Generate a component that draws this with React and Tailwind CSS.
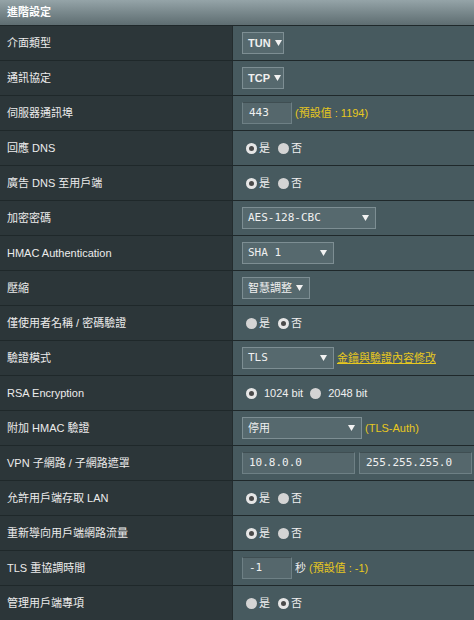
const FONT = { fontFamily: '"Liberation Sans", "Noto Sans CJK TC", sans-serif' };
const MONO = { fontFamily: '"DejaVu Sans Mono", "Noto Sans CJK TC", monospace' };

function Arrow() {
  return (
    <svg width="7" height="6" viewBox="0 0 7 6" className="shrink-0">
      <path d="M0 0 L7 0 L3.5 6 Z" fill="#f2f2f2" />
    </svg>
  );
}

function Select({ value, width, mono, bold }) {
  return (
    <div
      className={`flex h-[22px] items-center justify-between gap-[4px] whitespace-nowrap border border-[#7d8e93] bg-[#56696e] pl-[5px] pr-[6px] text-[11px] text-[#f0f0f0] ${bold ? "font-bold" : "font-normal"}`}
      style={{ width, ...(mono ? MONO : {}) }}
    >
      <span>{value}</span>
      <Arrow />
    </div>
  );
}

function Input({ value, width }) {
  return (
    <div
      className="flex h-[22px] items-center border border-[#6e8085] border-t-[#3f4e52] bg-[#55676c] pl-[6px] text-[11px] text-[#f0f0f0]"
      style={{ width, ...MONO }}
    >
      {value}
    </div>
  );
}

function Radio({ checked }) {
  return checked ? (
    <span className="flex h-[11px] w-[11px] shrink-0 items-center justify-center rounded-full bg-[#e6e6e6]">
      <span className="h-[5px] w-[5px] rounded-full bg-[#4a4a4a]" />
    </span>
  ) : (
    <span className="h-[11px] w-[11px] shrink-0 rounded-full bg-[#d4d4d4]" />
  );
}

function YesNo({ yes }) {
  return (
    <div className="flex items-center gap-[2px] pl-[4px] text-[11px] text-[#f0f0f0]">
      <Radio checked={yes} />
      <span className="mr-[6px]">是</span>
      <Radio checked={!yes} />
      <span>否</span>
    </div>
  );
}

const Note = ({ children }) => (
  <span className="whitespace-nowrap text-[11px] text-[#e8c81e]">{children}</span>
);

const rows = [
  ["介面類型", <Select value="TUN" width={42} bold />],
  ["通訊協定", <Select value="TCP" width={42} bold />],
  [
    "伺服器通訊埠",
    <div className="flex items-center gap-[3px]">
      <Input value="443" width={50} />
      <Note>(預設值 : 1194)</Note>
    </div>,
  ],
  ["回應 DNS", <YesNo yes />],
  ["廣告 DNS 至用戶端", <YesNo yes />],
  ["加密密碼", <Select value="AES-128-CBC" width={134} mono />],
  ["HMAC Authentication", <Select value="SHA 1" width={92} mono />],
  ["壓縮", <Select value="智慧調整" width={68} />],
  ["僅使用者名稱 / 密碼驗證", <YesNo yes={false} />],
  [
    "驗證模式",
    <div className="flex items-center gap-[3px]">
      <Select value="TLS" width={92} mono />
      <span className="whitespace-nowrap text-[11px] text-[#e8c81e] underline">金鑰與驗證內容修改</span>
    </div>,
  ],
  [
    "RSA Encryption",
    <div className="flex items-center pl-[4px] text-[11px] text-[#f0f0f0]">
      <Radio checked />
      <span className="ml-[7px] mr-[7px]">1024 bit</span>
      <Radio />
      <span className="ml-[7px]">2048 bit</span>
    </div>,
  ],
  [
    "附加 HMAC 驗證",
    <div className="flex items-center gap-[3px]">
      <Select value="停用" width={120} />
      <Note>(TLS-Auth)</Note>
    </div>,
  ],
  [
    "VPN 子網路 / 子網路遮罩",
    <div className="flex items-center gap-[4px]">
      <Input value="10.8.0.0" width={113} />
      <Input value="255.255.255.0" width={113} />
    </div>,
  ],
  ["允許用戶端存取 LAN", <YesNo yes />],
  ["重新導向用戶端網路流量", <YesNo yes />],
  [
    "TLS 重協調時間",
    <div className="flex items-center gap-[3px]">
      <Input value="-1" width={50} />
      <span className="text-[11px] text-[#f0f0f0]">秒</span>
      <Note>(預設值 : -1)</Note>
    </div>,
  ],
  ["管理用戶端專項", <YesNo yes={false} />],
];

export default function App() {
  return (
    <div className="h-[620px] w-[474px] overflow-hidden bg-[#475a5f]" style={FONT}>
      <div className="flex h-[25px] items-center bg-gradient-to-b from-[#95a4a8] to-[#5e6d71] pl-[7px] text-[11px] font-bold text-white">
        進階設定
      </div>
      {rows.map(([label, control]) => (
        <div key={label} className="flex h-[35px] border-t border-[#1f282a]">
          <div className="flex w-[233px] shrink-0 items-center border-r border-[#232c2e] bg-[#2c3639] pl-[7px] text-[11px] text-[#ececec]">
            {label}
          </div>
          <div className="flex flex-1 items-center bg-[#475a5f] pl-[9px]">{control}</div>
        </div>
      ))}
    </div>
  );
}
